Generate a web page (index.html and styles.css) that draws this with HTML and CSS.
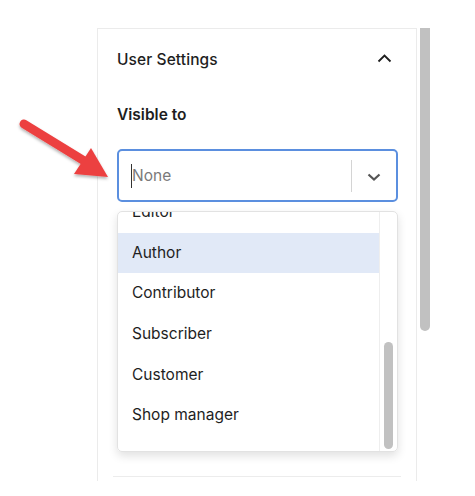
FILE: index.html
```html
<!DOCTYPE html>
<html lang="en">
<head>
    <meta charset="UTF-8">
    <meta name="viewport" content="width=device-width, initial-scale=1.0">
    <title>User Settings</title>
    <link rel="stylesheet" href="styles.css">
</head>
<body>
    <div class="page">
        <div class="panel">
            <div class="panel-header">
                <h2>User Settings</h2>
                <svg class="chevron-up" width="15" height="9" viewBox="0 0 15 9">
                    <path d="M1.5 7.5 L7.5 1.5 L13.5 7.5" fill="none" stroke="#1e1e1e" stroke-width="1.8"/>
                </svg>
            </div>
            <label class="field-label" for="visible_to">Visible to</label>
            <div class="select">
                <div class="select-value">
                    <span class="caret"></span>
                    <span class="placeholder">None</span>
                </div>
                <span class="select-divider"></span>
                <svg class="chevron-down" width="14" height="8" viewBox="0 0 14 8">
                    <path d="M1.5 1.5 L7 6.5 L12.5 1.5" fill="none" stroke="#555" stroke-width="2.2"/>
                </svg>
            </div>
            <div class="menu">
                <ul class="options">
                    <li>Editor</li>
                    <li class="active">Author</li>
                    <li>Contributor</li>
                    <li>Subscriber</li>
                    <li>Customer</li>
                    <li>Shop manager</li>
                </ul>
                <div class="menu-track">
                    <div class="menu-thumb"></div>
                </div>
            </div>
            <hr class="separator">
        </div>
        <div class="page-scroll"></div>
    </div>

    <svg class="arrow" width="120" height="190" viewBox="0 0 120 190">
        <defs>
            <filter id="shade" x="-20%" y="-20%" width="140%" height="140%">
                <feDropShadow dx="0" dy="2" stdDeviation="1.5" flood-color="#000" flood-opacity="0.3"/>
            </filter>
        </defs>
        <g filter="url(#shade)">
            <line x1="24" y1="124" x2="86" y2="162" stroke="#ec4141" stroke-width="9" stroke-linecap="round"/>
            <polygon points="91,148 74,174 108,177" fill="#ec4141"/>
        </g>
    </svg>
</body>
</html>
```

FILE: styles.css
```css
body {
    margin: 0;
    background: #fff;
    font-family: Inter, "Noto Sans", Arial, sans-serif;
    color: #1e1e1e;
}
.page {
    display: flex;
    align-items: flex-start;
    gap: 3px;
    padding: 28px 0 0 97px;
}
.panel {
    box-sizing: border-box;
    width: 320px;
    height: 453px;
    padding: 0 18px 0 19px;
    border: 1px solid #ebebeb;
    border-bottom: none;
}
.panel-header {
    display: flex;
    justify-content: space-between;
    align-items: center;
    height: 61px;
    padding-right: 6px;
}
.panel-header h2 {
    margin: 0;
    font-size: 15.5px;
    font-weight: 500;
    letter-spacing: 0.1px;
}
.chevron-up {
    margin-top: -2px;
}
.field-label {
    display: block;
    margin-top: 15px;
    font-size: 15.5px;
    font-weight: 600;
    line-height: 20px;
}
.select {
    box-sizing: border-box;
    display: flex;
    align-items: center;
    height: 53px;
    margin-top: 24px;
    padding-left: 13px;
    border: 2px solid #5b8fdf;
    border-radius: 5px;
}
.select-value {
    flex: 1;
    display: flex;
    align-items: center;
}
.caret {
    width: 1px;
    height: 24px;
    background: #333;
    margin-left: -1px;
}
.placeholder {
    font-size: 15.5px;
    color: #7a7a7a;
}
.select-divider {
    width: 1px;
    height: 32px;
    background: #d4d4d4;
}
.chevron-down {
    margin: 2px 15px 0 15px;
}
.menu {
    display: flex;
    height: 241px;
    margin-top: 9px;
    border: 1px solid #e2e2e2;
    border-radius: 5px;
    box-sizing: border-box;
    overflow: hidden;
    box-shadow: 0 4px 10px rgba(0, 0, 0, 0.12);
}
.options {
    flex: 1;
    list-style: none;
    margin: -20px 0 0 0;
    padding: 0;
}
.options li {
    height: 40.7px;
    line-height: 40.7px;
    padding-left: 14px;
    font-size: 15.5px;
}
.options li.active {
    background: #e1e9f7;
}
.menu-track {
    width: 17px;
    border-left: 1px solid #eeeeee;
    display: flex;
    flex-direction: column;
    justify-content: flex-end;
    align-items: center;
    padding-bottom: 2px;
}
.menu-thumb {
    width: 9px;
    height: 107px;
    border-radius: 5px;
    background: #c1c1c1;
}
.separator {
    margin: 24px -3px 0 -4px;
    border: none;
    border-top: 1px solid #ececec;
}
.page-scroll {
    width: 10px;
    height: 303px;
    background: #c1c1c1;
    border-radius: 0 0 5px 5px;
}
.arrow {
    position: absolute;
    left: 0;
    top: 0;
}
```
